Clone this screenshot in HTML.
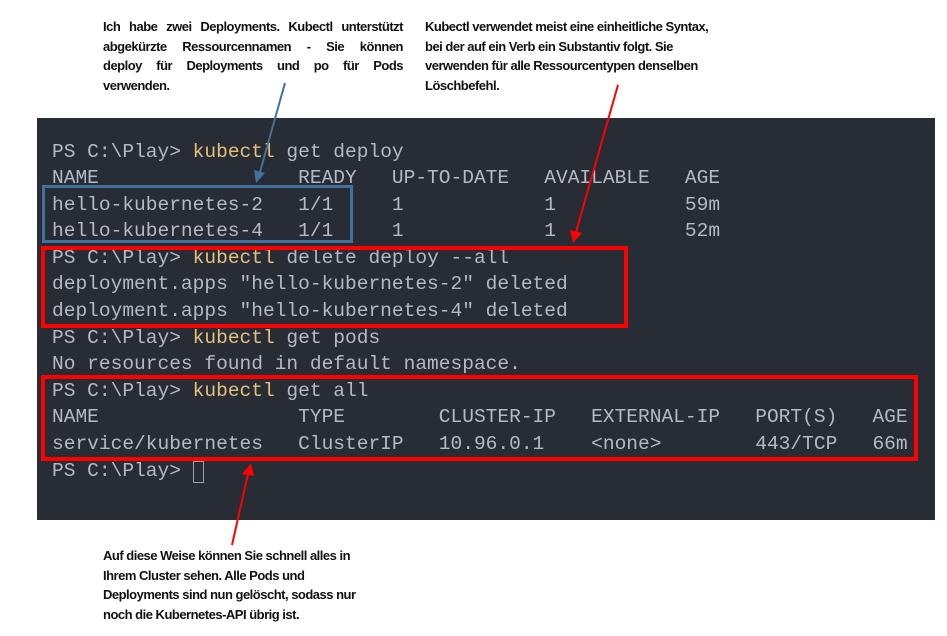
<!DOCTYPE html>
<html><head><meta charset="utf-8"><style>
body{margin:0;width:947px;height:636px;background:#fff;position:relative;overflow:hidden}
.term{position:absolute;left:37px;top:118px;width:898px;height:402px;background:#282c34}
.l{position:absolute;left:52px;font-family:"Liberation Mono",monospace;font-size:19.55px;color:#b4bac4;white-space:pre;line-height:26px}
.y{color:#e5c07b}
.note{position:absolute;font-family:"Liberation Sans",sans-serif;font-weight:bold;font-size:13px;color:#111;line-height:19.5px;letter-spacing:-0.5px;white-space:nowrap}
.j{display:block;text-align:justify;text-align-last:justify;width:300px;height:19.5px}
.box{position:absolute;box-sizing:border-box}
</style></head><body>
<div class="note" style="left:103px;top:17px;width:300px"><span class="j">Ich habe zwei Deployments. Kubectl unterstützt</span><span class="j">abgekürzte Ressourcennamen - Sie können</span><span class="j">deploy für Deployments und po für Pods</span>verwenden.</div>
<div class="note" style="left:425px;top:17px">Kubectl verwendet meist eine einheitliche Syntax,<br>bei der auf ein Verb ein Substantiv folgt. Sie<br>verwenden für alle Ressourcentypen denselben<br>Löschbefehl.</div>
<div class="note" style="left:103px;top:546px">Auf diese Weise können Sie schnell alles in<br>Ihrem Cluster sehen. Alle Pods und<br>Deployments sind nun gelöscht, sodass nur<br>noch die Kubernetes-API übrig ist.</div>
<div class="term"></div>
<div class="l" style="top:139px">PS C:\Play&gt; <span class="y">kubectl</span> get deploy</div>
<div class="l" style="top:165px">NAME                 READY   UP-TO-DATE   AVAILABLE   AGE</div>
<div class="l" style="top:192px">hello-kubernetes-2   1/1     1            1           59m</div>
<div class="l" style="top:218px">hello-kubernetes-4   1/1     1            1           52m</div>
<div class="l" style="top:245px">PS C:\Play&gt; <span class="y">kubectl</span> delete deploy --all</div>
<div class="l" style="top:271px">deployment.apps "hello-kubernetes-2" deleted</div>
<div class="l" style="top:298px">deployment.apps "hello-kubernetes-4" deleted</div>
<div class="l" style="top:325px">PS C:\Play&gt; <span class="y">kubectl</span> get pods</div>
<div class="l" style="top:351px">No resources found in default namespace.</div>
<div class="l" style="top:378px">PS C:\Play&gt; <span class="y">kubectl</span> get all</div>
<div class="l" style="top:404px">NAME                 TYPE        CLUSTER-IP   EXTERNAL-IP   PORT(S)   AGE</div>
<div class="l" style="top:431px">service/kubernetes   ClusterIP   10.96.0.1    &lt;none&gt;        443/TCP   66m</div>
<div class="l" style="top:458px">PS C:\Play&gt; </div>
<div class="box" style="left:193px;top:461px;width:11px;height:22px;border:1.5px solid #9aa0aa"></div>
<div class="box" style="left:42px;top:185px;width:311px;height:58px;border:3px solid #41719c"></div>
<div class="box" style="left:41px;top:246px;width:587px;height:82px;border:4px solid #f00"></div>
<div class="box" style="left:41px;top:375px;width:877px;height:86px;border:4px solid #f00"></div>
<svg width="947" height="636" style="position:absolute;left:0;top:0">
<line x1="285" y1="83" x2="260" y2="172" stroke="#41719c" stroke-width="2"/>
<polygon points="256,183 254,170 265,173" fill="#41719c"/>
<line x1="618" y1="85" x2="576" y2="232" stroke="#f00" stroke-width="2"/>
<polygon points="573,243 570,230 582,233" fill="#f00"/>
<line x1="232" y1="545" x2="248" y2="474" stroke="#f00" stroke-width="2"/>
<polygon points="251,463 254,476 242,474" fill="#f00"/>
</svg>
</body></html>
